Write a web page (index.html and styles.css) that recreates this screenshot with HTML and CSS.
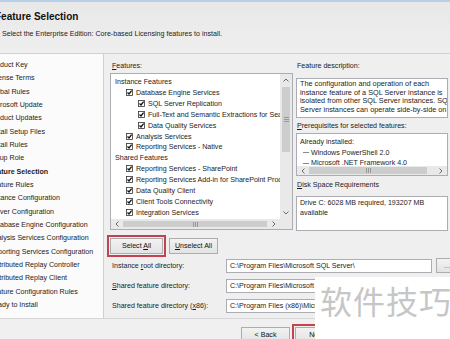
FILE: index.html
```html
<!DOCTYPE html>
<html>
<head>
    <title>SQL Server Setup - Feature Selection</title>
    <link rel="stylesheet" href="styles.css">
</head>
<body>
<div class="window">
    <div class="header">
        <h1 class="title">Feature Selection</h1>
        <p class="subtitle">Select the Enterprise Edition: Core-based Licensing features to install.</p>
    </div>

    <div class="main">
        <ul class="steps">
            <li>Product Key</li>
            <li>License Terms</li>
            <li>Global Rules</li>
            <li>Microsoft Update</li>
            <li>Product Updates</li>
            <li>Install Setup Files</li>
            <li>Install Rules</li>
            <li>Setup Role</li>
            <li class="current">Feature Selection</li>
            <li>Feature Rules</li>
            <li>Instance Configuration</li>
            <li>Server Configuration</li>
            <li>Database Engine Configuration</li>
            <li>Analysis Services Configuration</li>
            <li>Reporting Services Configuration</li>
            <li>Distributed Replay Controller</li>
            <li>Distributed Replay Client</li>
            <li>Feature Configuration Rules</li>
            <li>Ready to Install</li>
        </ul>

        <div class="content">
            <div class="panes">
                <div class="features">
                    <div class="label"><u>F</u>eatures:</div>
                    <div class="tree">
                        <div class="tree-view">
                            <div class="node">Instance Features</div>
                            <div class="node lvl1"><svg class="check" viewBox="0 0 7 7"><rect x="0.5" y="0.5" width="6" height="6"/><path d="M1.5 3.6 L3 5 L5.6 1.6"/></svg>Database Engine Services</div>
                            <div class="node lvl2"><svg class="check" viewBox="0 0 7 7"><rect x="0.5" y="0.5" width="6" height="6"/><path d="M1.5 3.6 L3 5 L5.6 1.6"/></svg>SQL Server Replication</div>
                            <div class="node lvl2"><svg class="check" viewBox="0 0 7 7"><rect x="0.5" y="0.5" width="6" height="6"/><path d="M1.5 3.6 L3 5 L5.6 1.6"/></svg>Full-Text and Semantic Extractions for Search</div>
                            <div class="node lvl2"><svg class="check" viewBox="0 0 7 7"><rect x="0.5" y="0.5" width="6" height="6"/><path d="M1.5 3.6 L3 5 L5.6 1.6"/></svg>Data Quality Services</div>
                            <div class="node lvl1"><svg class="check" viewBox="0 0 7 7"><rect x="0.5" y="0.5" width="6" height="6"/><path d="M1.5 3.6 L3 5 L5.6 1.6"/></svg>Analysis Services</div>
                            <div class="node lvl1"><svg class="check" viewBox="0 0 7 7"><rect x="0.5" y="0.5" width="6" height="6"/><path d="M1.5 3.6 L3 5 L5.6 1.6"/></svg>Reporting Services - Native</div>
                            <div class="node">Shared Features</div>
                            <div class="node lvl1"><svg class="check" viewBox="0 0 7 7"><rect x="0.5" y="0.5" width="6" height="6"/><path d="M1.5 3.6 L3 5 L5.6 1.6"/></svg>Reporting Services - SharePoint</div>
                            <div class="node lvl1"><svg class="check" viewBox="0 0 7 7"><rect x="0.5" y="0.5" width="6" height="6"/><path d="M1.5 3.6 L3 5 L5.6 1.6"/></svg>Reporting Services Add-in for SharePoint Products</div>
                            <div class="node lvl1"><svg class="check" viewBox="0 0 7 7"><rect x="0.5" y="0.5" width="6" height="6"/><path d="M1.5 3.6 L3 5 L5.6 1.6"/></svg>Data Quality Client</div>
                            <div class="node lvl1"><svg class="check" viewBox="0 0 7 7"><rect x="0.5" y="0.5" width="6" height="6"/><path d="M1.5 3.6 L3 5 L5.6 1.6"/></svg>Client Tools Connectivity</div>
                            <div class="node lvl1"><svg class="check" viewBox="0 0 7 7"><rect x="0.5" y="0.5" width="6" height="6"/><path d="M1.5 3.6 L3 5 L5.6 1.6"/></svg>Integration Services</div>
                        </div>
                        <div class="vscroll">
                            <div class="arrow"><svg width="6" height="4" viewBox="0 0 6 4"><path d="M0.5 3.5 L3 1 L5.5 3.5"/></svg></div>
                            <div class="vthumb"><svg width="5" height="5" viewBox="0 0 5 5"><path d="M0 0.5 H5 M0 2.5 H5 M0 4.5 H5"/></svg></div>
                            <div class="track"></div>
                            <div class="arrow"><svg width="6" height="4" viewBox="0 0 6 4"><path d="M0.5 0.5 L3 3 L5.5 0.5"/></svg></div>
                        </div>
                        <div class="hscroll">
                            <div class="arrow"><svg width="4" height="6" viewBox="0 0 4 6"><path d="M3.5 0.5 L1 3 L3.5 5.5"/></svg></div>
                            <div class="hthumb wide"><svg width="5" height="5" viewBox="0 0 5 5"><path d="M0.5 0 V5 M2.5 0 V5 M4.5 0 V5"/></svg></div>
                            <div class="arrow"><svg width="4" height="6" viewBox="0 0 4 6"><path d="M0.5 0.5 L3 3 L0.5 5.5"/></svg></div>
                        </div>
                        <div class="corner"></div>
                    </div>
                    <div class="select-btns">
                        <button class="btn marked">Select <u>A</u>ll</button>
                        <button class="btn"><u>U</u>nselect All</button>
                    </div>
                </div>

                <div class="details">
                    <div class="label">Feature description:</div>
                    <div class="box desc">The configuration and operation of each<br>instance feature of a SQL Server instance is<br>isolated from other SQL Server instances. SQL<br>Server instances can operate side-by-side on</div>
                    <div class="label gap"><u>P</u>rerequisites for selected features:</div>
                    <div class="box prereq">
                        <div class="prereq-list">
                            <div>Already installed:</div>
                            <div class="leaf">Windows PowerShell 2.0</div>
                            <div class="leaf">Microsoft .NET Framework 4.0</div>
                        </div>
                        <div class="hscroll">
                            <div class="arrow"><svg width="4" height="6" viewBox="0 0 4 6"><path d="M3.5 0.5 L1 3 L3.5 5.5"/></svg></div>
                            <div class="hthumb"><svg width="5" height="5" viewBox="0 0 5 5"><path d="M0.5 0 V5 M2.5 0 V5 M4.5 0 V5"/></svg></div>
                            <div class="track"></div>
                            <div class="arrow"><svg width="4" height="6" viewBox="0 0 4 6"><path d="M0.5 0.5 L3 3 L0.5 5.5"/></svg></div>
                        </div>
                    </div>
                    <div class="label disk"><u>D</u>isk Space Requirements</div>
                    <div class="box space">Drive C: 6028 MB required, 193207 MB available</div>
                </div>
            </div>

            <div class="dirs">
                <div class="dir-label">Instance <u>r</u>oot directory:</div>
                <div class="field">C:\Program Files\Microsoft SQL Server\</div>
                <button class="btn browse">...</button>

                <div class="dir-label"><u>S</u>hared feature directory:</div>
                <div class="field">C:\Program Files\Microsoft SQL Server\</div>
                <button class="btn browse">...</button>

                <div class="dir-label">Shared feature directory (<u>x</u>86):</div>
                <div class="field">C:\Program Files (x86)\Microsoft SQL Server\</div>
                <button class="btn browse">...</button>
            </div>
        </div>
    </div>

    <div class="footer">
        <button class="btn">&lt; Back</button>
        <button class="btn marked">Next &gt;</button>
        <button class="btn">Cancel</button>
        <button class="btn">Help</button>
    </div>

    <div class="watermark">软件技巧</div>
</div>
</body>
</html>
```

FILE: styles.css
```css
* { box-sizing: border-box; }
body { margin: 0; font-family: "Liberation Sans", Arial, sans-serif; font-size: 7.1px; color: #1c1c1c; background: #efefef; }
u { text-decoration-thickness: 0.5px; text-underline-offset: 1px; }

.window { position: relative; width: 450px; height: 339px; overflow: hidden; display: flex; flex-direction: column; }

/* header */
.header { flex: none; height: 54px; border-top: 2px solid #b7d0e8; border-bottom: 1px solid #d2d2d2; background: linear-gradient(#e8e8e8, #efefef); padding-top: 9px; }
.title { margin: 0 0 0 -5px; font-size: 10px; font-weight: bold; line-height: 12px; color: #111; }
.subtitle { margin: 7px 0 0 2px; line-height: 9px; }

/* body */
.main { flex: none; height: 264px; display: flex; }
.steps { flex: none; width: 104px; margin: 0; padding: 5px 0 0; list-style: none; background: #fbfbfb; border-right: 1px solid #cfcfcf; overflow: hidden; }
.steps li { margin-left: -11px; line-height: 13.33px; white-space: nowrap; }
.steps .current { font-weight: bold; }

.content { flex: 1; min-width: 0; padding: 7px 2px 0 6px; }
.panes { display: flex; gap: 3px; }
.features { flex: none; width: 183px; }
.details { flex: 1; min-width: 0; }
.label { line-height: 10px; padding-left: 2px; margin-bottom: 2px; white-space: nowrap; }
.details .label { padding-left: 1px; margin-bottom: 7px; }
.details .gap { margin-top: 3px; margin-bottom: 2px; }
.details .disk { margin-top: 4px; margin-bottom: 6px; }

/* feature tree */
.tree { height: 157px; border: 1px solid #acadb3; background: #fff; display: grid; grid-template-columns: 1fr 12px; grid-template-rows: 1fr 10px; }
.tree-view { padding: 3px 0 0 4px; overflow: hidden; }
.node { line-height: 10.9px; white-space: nowrap; }
.lvl1 { padding-left: 11px; }
.lvl2 { padding-left: 23px; }
.check { width: 7px; height: 7px; margin-right: 3px; vertical-align: -1px; }
.check rect { fill: #fff; stroke: #333; stroke-width: 0.8; }
.check path { fill: none; stroke: #111; stroke-width: 1.3; }

.vscroll { background: #e9e9e9; display: flex; flex-direction: column; }
.hscroll { background: #e9e9e9; display: flex; }
.arrow { flex: none; width: 12px; height: 12px; display: flex; align-items: center; justify-content: center; }
.hscroll .arrow { height: auto; }
.arrow svg path { fill: none; stroke: #6a6a6a; stroke-width: 1; }
.vthumb { height: 65px; margin: 1px 2px 0; background: #cdcdcd; display: flex; align-items: center; justify-content: center; }
.hthumb { flex: none; width: 120px; margin: 2px 0; background: #cdcdcd; display: flex; align-items: center; justify-content: center; }
.hthumb.wide { flex: 1; margin-right: 1px; }
.vthumb path, .hthumb path { stroke: #8a8a8a; stroke-width: 0.8; fill: none; }
.track { flex: 1; }
.corner { background: #e9e9e9; }

/* buttons */
.btn { font: inherit; color: #111; height: 16px; padding: 0; border: 1px solid #adadad; background: linear-gradient(#f2f2f2, #e3e3e3); line-height: 14px; }
.marked { outline: 2px solid #c4424f; outline-offset: 1px; }
.select-btns { display: flex; gap: 6px; margin-top: 8px; }
.select-btns .btn:first-child { width: 53px; }
.select-btns .btn:last-child { width: 49px; }

/* right column boxes */
.box { border: 1px solid #acadb3; background: #fff; overflow: hidden; }
.desc { height: 40px; padding: 1px 0 0 3px; font-size: 7.3px; line-height: 8.7px; white-space: nowrap; }
.prereq { height: 43px; display: grid; grid-template-rows: 1fr 9px; }
.prereq-list { padding: 3px 0 0 3px; line-height: 10.5px; white-space: nowrap; overflow: hidden; }
.leaf { display: flex; align-items: center; }
.leaf::before { content: ""; width: 6px; margin: 0 2px 0 3px; border-top: 1px solid #8a8a8a; }
.prereq .hthumb { width: 118px; margin: 1px 0; }
.space { height: 35px; padding: 2px 3px; line-height: 9.7px; }

/* directories */
.dirs { display: grid; grid-template-columns: 112px 206px 22px; column-gap: 4px; row-gap: 6px; grid-auto-rows: 14px; margin-top: 5px; }
.dir-label { padding-left: 2px; line-height: 14px; white-space: nowrap; }
.field { border: 1px solid #acadb3; background: #fff; padding-left: 3px; line-height: 12px; white-space: nowrap; overflow: hidden; }
.browse { height: 15px; margin-top: -1px; color: #666; }

/* footer */
.footer { flex: 1; border-top: 1px solid #d6d6d6; background: #f0f0f0; display: flex; gap: 5px; padding: 8px 0 0 241px; }
.footer .btn { flex: none; width: 49px; }

/* watermark pasted over the shot */
.watermark { position: absolute; left: 315px; top: 277px; width: 140px; height: 70px; background: #fff; padding: 7px 0 0 5px; font-family: "Noto Sans CJK SC", sans-serif; font-size: 32px; line-height: 32px; letter-spacing: 1px; color: #c6c6c6; white-space: nowrap; }
```
